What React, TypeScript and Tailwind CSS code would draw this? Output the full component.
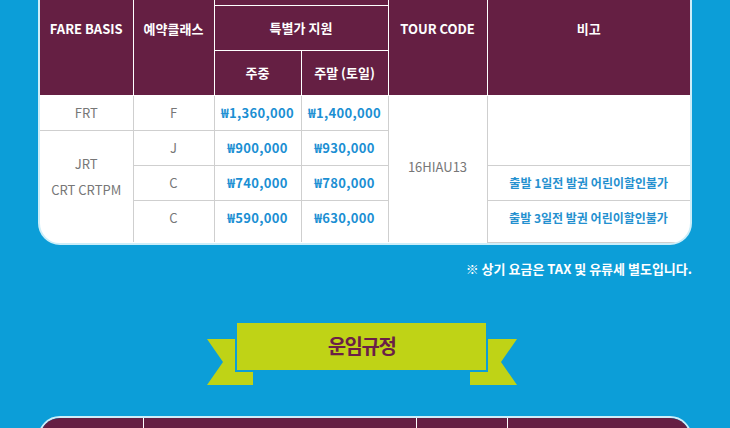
const headCell = "border-r border-b border-white text-white font-bold text-[13px] text-center align-middle";
const cell = "border-r border-b border-[#cfcfcf] text-center align-middle";
const gray = "text-[13px] text-[#777]";
const price = "text-[13px] font-semibold text-[#1b8fd3] tracking-[0.3px]";
const note = "text-[12px] font-bold text-[#2490cf]";

const Ribbon = ({ title }: { title: string }) => (
  <div className="relative ml-[207px] h-[64px] w-[310px]">
    <svg width="310" height="64" viewBox="0 0 310 64" className="block">
      <polygon points="0,18 46,18 46,64 0,64 16,41" fill="#bfd316" />
      <polygon points="310,18 263,18 263,64 310,64 294,41" fill="#bfd316" />
    </svg>
    <div className="absolute left-[28px] top-0 flex h-[51px] w-[253px] items-center justify-center border-2 border-[#0c9ed8] bg-[#bfd316]">
      <span className="text-[20px] font-bold tracking-[-1.5px] text-[#6b1f47]">{title}</span>
    </div>
  </div>
);

export default function App() {
  return (
    <div className="h-[428px] w-[730px] overflow-hidden bg-[#0c9ed8] font-['Noto_Sans_CJK_KR',sans-serif]">
      <div className="mx-auto -mt-[39px] w-[654px] overflow-hidden rounded-[22px] border-2 border-[#cdeef9] bg-white">
        <table className="w-[650px] table-fixed border-collapse">
          <colgroup>
            <col className="w-[93px]" />
            <col className="w-[81px]" />
            <col className="w-[87px]" />
            <col className="w-[87px]" />
            <col className="w-[99px]" />
            <col className="w-[203px]" />
          </colgroup>
          <thead className="bg-[#651f43]">
            <tr className="h-[42px]">
              <th rowSpan={3} className={headCell}>FARE BASIS</th>
              <th rowSpan={3} className={headCell}>예약클래스</th>
              <th colSpan={2} className={headCell}></th>
              <th rowSpan={3} className={headCell}>TOUR CODE</th>
              <th rowSpan={3} className={`${headCell} border-r-0`}>비고</th>
            </tr>
            <tr className="h-[45px]">
              <th colSpan={2} className={headCell}>특별가 지원</th>
            </tr>
            <tr className="h-[45px]">
              <th className={headCell}>주중</th>
              <th className={headCell}>주말 (토일)</th>
            </tr>
          </thead>
          <tbody>
            <tr className="h-[35px]">
              <td className={`${cell} ${gray}`}>FRT</td>
              <td className={`${cell} ${gray}`}>F</td>
              <td className={`${cell} ${price}`}>₩1,360,000</td>
              <td className={`${cell} ${price}`}>₩1,400,000</td>
              <td rowSpan={4} className={`${cell} border-b-0 pb-[5px] ${gray}`}>16HIAU13</td>
              <td rowSpan={2} className={`${cell} border-r-0`}></td>
            </tr>
            <tr className="h-[35px]">
              <td rowSpan={3} className={`${cell} border-b-0 pb-[18px] leading-[26px] ${gray}`}>
                JRT
                <br />
                CRT CRTPM
              </td>
              <td className={`${cell} ${gray}`}>J</td>
              <td className={`${cell} ${price}`}>₩900,000</td>
              <td className={`${cell} ${price}`}>₩930,000</td>
            </tr>
            <tr className="h-[35px]">
              <td className={`${cell} ${gray}`}>C</td>
              <td className={`${cell} ${price}`}>₩740,000</td>
              <td className={`${cell} ${price}`}>₩780,000</td>
              <td className={`${cell} border-r-0 ${note}`}>출발 1일전 발권 어린이할인불가</td>
            </tr>
            <tr className="h-[42px]">
              <td className={`${cell} border-b-0 pb-[7px] ${gray}`}>C</td>
              <td className={`${cell} border-b-0 pb-[7px] ${price}`}>₩590,000</td>
              <td className={`${cell} border-b-0 pb-[7px] ${price}`}>₩630,000</td>
              <td className={`${cell} border-0 pb-[7px] ${note}`}>출발 3일전 발권 어린이할인불가</td>
            </tr>
          </tbody>
        </table>
      </div>

      <p className="mx-auto mt-[14px] w-[654px] text-right text-[13px] font-bold leading-[19px] text-white">
        ※ 상기 요금은 TAX 및 유류세 별도입니다.
      </p>

      <div className="mt-[43px]">
        <Ribbon title="운임규정" />
      </div>

      <div className="mx-auto mt-[31px] w-[654px] overflow-hidden rounded-[22px] border-2 border-[#cdeef9] bg-white">
        <div className="grid h-[60px] grid-cols-[104px_273px_91px_182px] bg-[#651f43]">
          <div className="border-r border-white" />
          <div className="border-r border-white" />
          <div className="border-r border-white" />
          <div />
        </div>
      </div>
    </div>
  );
}
